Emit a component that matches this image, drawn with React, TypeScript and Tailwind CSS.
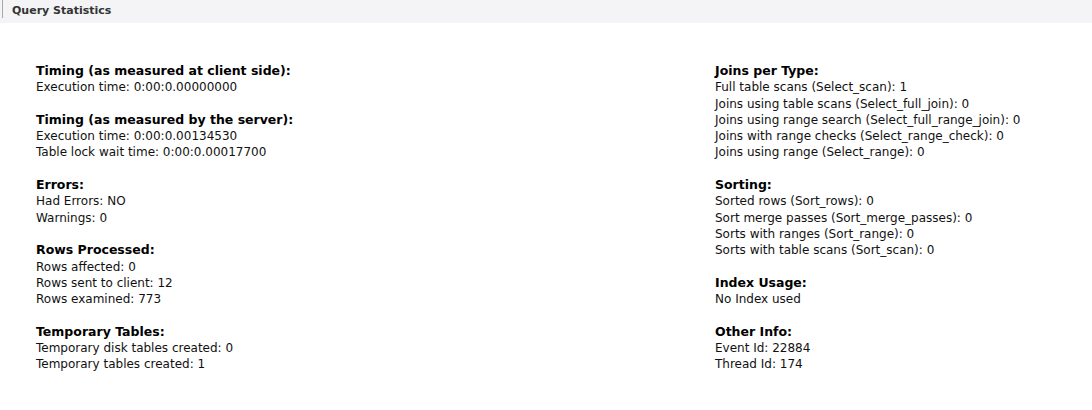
const left = [
  { title: 'Timing (as measured at client side):', lines: ['Execution time: 0:00:0.00000000'] },
  {
    title: 'Timing (as measured by the server):',
    lines: ['Execution time: 0:00:0.00134530', 'Table lock wait time: 0:00:0.00017700'],
  },
  { title: 'Errors:', lines: ['Had Errors: NO', 'Warnings: 0'] },
  {
    title: 'Rows Processed:',
    lines: ['Rows affected: 0', 'Rows sent to client: 12', 'Rows examined: 773'],
  },
  {
    title: 'Temporary Tables:',
    lines: ['Temporary disk tables created: 0', 'Temporary tables created: 1'],
  },
];

const right = [
  {
    title: 'Joins per Type:',
    lines: [
      'Full table scans (Select_scan): 1',
      'Joins using table scans (Select_full_join): 0',
      'Joins using range search (Select_full_range_join): 0',
      'Joins with range checks (Select_range_check): 0',
      'Joins using range (Select_range): 0',
    ],
  },
  {
    title: 'Sorting:',
    lines: [
      'Sorted rows (Sort_rows): 0',
      'Sort merge passes (Sort_merge_passes): 0',
      'Sorts with ranges (Sort_range): 0',
      'Sorts with table scans (Sort_scan): 0',
    ],
  },
  { title: 'Index Usage:', lines: ['No Index used'] },
  { title: 'Other Info:', lines: ['Event Id: 22884', 'Thread Id: 174'] },
];

type Section = { title: string; lines: string[] };

const Column = ({ sections }: { sections: Section[] }) => (
  <div className="flex flex-col gap-[16.3px]">
    {sections.map((s) => (
      <div key={s.title}>
        <p className="text-[12.5px] font-bold leading-[16.3px] text-black whitespace-nowrap">{s.title}</p>
        {s.lines.map((l) => (
          <p key={l} className="text-[12px] leading-[16.3px] text-[#111] whitespace-nowrap">
            {l}
          </p>
        ))}
      </div>
    ))}
  </div>
);

const App = () => {
  return (
    <div
      className="w-[1092px] h-[410px] bg-white overflow-hidden"
      style={{ fontFamily: '"DejaVu Sans", Tahoma, sans-serif' }}
    >
      {/* Header */}
      <div className="h-[23px] bg-[#f4f4f6] flex items-start">
        <div className="ml-[2px] w-px h-[18px] bg-[#a8a8a8]" />
        <span className="ml-[9px] mt-[4px] text-[11px] font-bold leading-[14px] text-[#333]">
          Query Statistics
        </span>
      </div>

      {/* Stats */}
      <div className="grid grid-cols-[679px_1fr] pl-[36px] pt-[40px]">
        <Column sections={left} />
        <Column sections={right} />
      </div>
    </div>
  );
};

export default App;
